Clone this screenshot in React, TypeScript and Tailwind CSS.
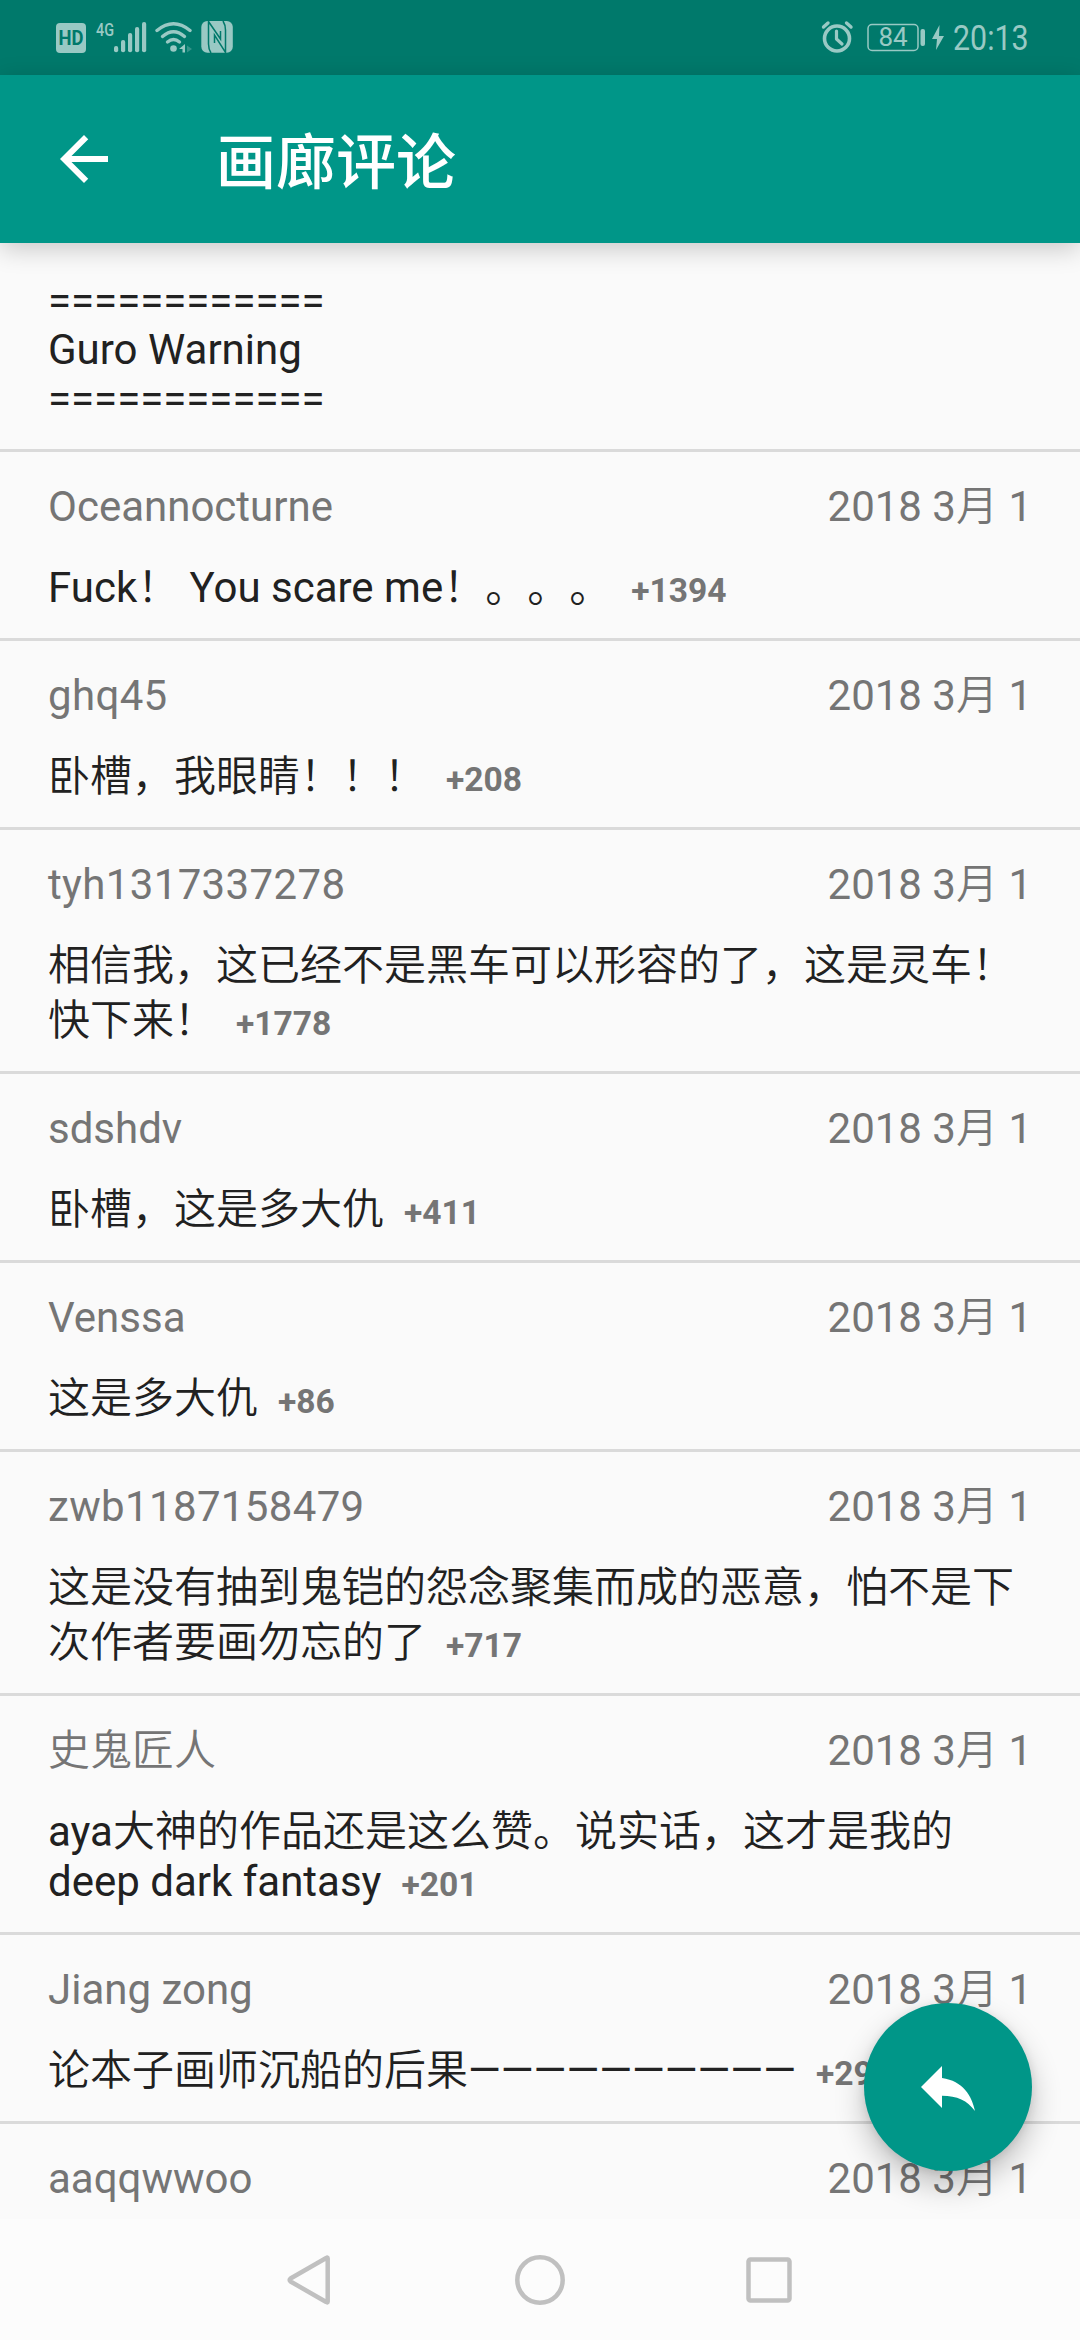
type Line = { text: string; latin?: boolean };

type Comment = {
  author: string;
  lines: Line[];
  score: string;
};

const DATE = '2018 3月 1';

const comments: Comment[] = [
  {
    author: 'Oceannocturne',
    lines: [{ text: 'Fuck！ You scare me！。。。' }],
    score: '+1394',
  },
  { author: 'ghq45', lines: [{ text: '卧槽，我眼睛！！！' }], score: '+208' },
  {
    author: 'tyh1317337278',
    lines: [
      { text: '相信我，这已经不是黑车可以形容的了，这是灵车！' },
      { text: '快下来！' },
    ],
    score: '+1778',
  },
  { author: 'sdshdv', lines: [{ text: '卧槽，这是多大仇' }], score: '+411' },
  { author: 'Venssa', lines: [{ text: '这是多大仇' }], score: '+86' },
  {
    author: 'zwb1187158479',
    lines: [
      { text: '这是没有抽到鬼铠的怨念聚集而成的恶意，怕不是下' },
      { text: '次作者要画勿忘的了' },
    ],
    score: '+717',
  },
  {
    author: '史鬼匠人',
    lines: [
      { text: 'aya大神的作品还是这么赞。说实话，这才是我的' },
      { text: 'deep dark fantasy', latin: true },
    ],
    score: '+201',
  },
  {
    author: 'Jiang zong',
    lines: [{ text: '论本子画师沉船的后果——————————' }],
    score: '+29',
  },
  { author: 'aaqqwwoo', lines: [], score: '' },
];

const StatusBar = () => (
  <div className="flex h-[75px] shrink-0 items-center justify-between bg-[#00796b] pr-[37px] pl-14 text-[#99c9c4]">
    <svg width="178" height="45" viewBox="56 15 178 45" fill="currentColor">
      <rect x="56" y="23" width="30" height="30" rx="4" />
      <text
        x="58.5"
        y="45"
        fill="#00796b"
        fontSize="20"
        fontWeight="700"
        textLength="25"
        lengthAdjust="spacingAndGlyphs"
        fontFamily="Roboto, sans-serif"
      >
        HD
      </text>
      <text
        x="96"
        y="35.5"
        fontSize="19"
        fontWeight="500"
        textLength="18"
        lengthAdjust="spacingAndGlyphs"
        fontFamily="Roboto, sans-serif"
      >
        4G
      </text>
      <rect x="114" y="46" width="4.2" height="6.3" rx="2" />
      <rect x="121" y="40" width="4.2" height="12.3" rx="2" />
      <rect x="128" y="33" width="4.2" height="19.3" rx="2" />
      <rect x="135" y="27" width="4.2" height="25.3" rx="2" />
      <rect x="142" y="22" width="4.2" height="30.3" rx="2" />
      <g fill="none" stroke="currentColor" strokeWidth="3.4" strokeLinecap="round">
        <path d="M157 30.5Q173.5 17 190 30.5" />
        <path d="M162.5 36.5Q173.5 27 184.5 36.5" />
        <path d="M167.5 42Q173.5 37 179.5 42" />
      </g>
      <circle cx="173.5" cy="48.5" r="3.3" />
      <path d="M185 44v8.500h-2.500v-3.500h-3.500z" />
      <path d="M187 45.500l5 3.500-5 3.500z" opacity="0.35" />
      <rect x="201.3" y="21" width="31.5" height="31.7" rx="6" />
      <path
        d="M211 53Q208.500 49 208.500 44V21.500L220.500 39V31M223 21Q225.500 25 225.500 30V52.500L214.500 35V43"
        fill="none"
        stroke="#00796b"
        strokeWidth="1.5"
      />
    </svg>
    <div className="flex items-center">
      <svg width="123" height="45" viewBox="821 15 123 45" fill="none" stroke="currentColor">
        <circle cx="837" cy="38.5" r="12.5" strokeWidth="3.6" />
        <path d="M836.5 31v8l5.5 5" strokeWidth="3.2" strokeLinecap="round" strokeLinejoin="round" />
        <path d="M823.5 27l4.500-4M846.500 23l4.500 4" strokeWidth="3.4" strokeLinecap="round" />
        <rect x="868" y="24.5" width="50" height="26" rx="4" strokeWidth="1.5" />
        <rect x="920.5" y="29" width="4.5" height="17" rx="2" fill="currentColor" stroke="none" />
        <text x="878.5" y="46" fontSize="26" fill="currentColor" stroke="none" fontFamily="Roboto, sans-serif">
          84
        </text>
        <path d="M939.5 25l-7.500 14h5l-1 11 8-14h-5z" fill="currentColor" stroke="none" />
      </svg>
      <span className="ml-[9px] w-[90px] origin-left scale-x-[0.88] text-[34.5px] leading-[42px]">
        20:13
      </span>
    </div>
  </div>
);

const CommentRow = ({ author, lines, score }: Comment) => (
  <article className="border-b-[3px] border-[#dadada] px-12 pt-[27px]">
    <div className="flex h-[81px] justify-between leading-[55px] text-[#757575]">
      <h3 className={/\d/.test(author) ? 'tracking-[0.35px]' : ''}>{author}</h3>
      <time>{DATE}</time>
    </div>
    <div className="pb-[23px]">
      {lines.map((line, i) => (
        <p
          key={line.text}
          className={
            line.latin
              ? 'h-[50px] leading-[45px] whitespace-nowrap'
              : 'h-[55px] leading-[55px] whitespace-nowrap'
          }
        >
          {line.text}
          {i === lines.length - 1 ? (
            <span className="ml-5 text-[33.6px] leading-none font-bold text-[#757575]">
              {score}
            </span>
          ) : null}
        </p>
      ))}
    </div>
  </article>
);

const App = () => {
  return (
    <div
      lang="zh-CN"
      className="relative flex h-[2340px] w-[1080px] flex-col overflow-hidden bg-[#fafafa] font-[Roboto,'Noto_Sans_CJK_SC_DemiLight','Noto_Sans_CJK_SC_Light','Noto_Sans_CJK_SC',sans-serif] text-[42px] text-[#212121] [text-spacing-trim:space-all]"
    >
      <StatusBar />
      <header className="relative z-10 flex h-[168px] shrink-0 items-center bg-[#009688] pl-12 text-white shadow-[0_6px_24px_rgba(0,0,0,0.2)]">
        <button aria-label="返回">
          <svg width="72" height="72" viewBox="0 0 24 24" fill="currentColor">
            <path d="M20 11H7.830l5.590-5.590L12 4l-8 8 8 8 1.410-1.410L7.830 13H20v-2z" />
          </svg>
        </button>
        <h1 className="ml-24 pt-[9px] font-[Roboto,'Noto_Sans_CJK_SC',sans-serif] text-[60px] leading-none font-medium">
          画廊评论
        </h1>
      </header>

      <main className="min-h-0 flex-1 overflow-hidden">
        <section className="h-[209px] border-b-[3px] border-[#dadada] px-12 pt-[33px] leading-[49px]">
          <p>============</p>
          <p>Guro Warning</p>
          <p>============</p>
        </section>
        {comments.map((comment) => (
          <CommentRow key={comment.author} {...comment} />
        ))}
      </main>

      <nav className="relative z-30 flex h-[121px] shrink-0 items-center justify-center bg-[#fcfcfc]">
        <svg width="508" height="54" viewBox="286 2253 508 54" fill="none" stroke="#c0c0c0" strokeWidth="4.5">
          <path
            d="M327.700 2258.500v43q0 1.500-1.500.5L290.500 2281.500q-1.500-1.500 0-3L326.200 2258q1.500-1 1.500.5z"
            strokeLinejoin="round"
          />
          <circle cx="540" cy="2280" r="22.7" />
          <rect x="748.5" y="2259.5" width="41" height="41" rx="2" />
        </svg>
      </nav>

      <button
        aria-label="回复"
        className="absolute right-12 bottom-[169px] z-20 flex size-[168px] items-center justify-center rounded-full bg-[#009688] text-white shadow-[0_14px_30px_rgba(0,0,0,0.24),0_2px_10px_rgba(0,0,0,0.1)]"
      >
        <svg width="72" height="72" viewBox="0 0 24 24" fill="currentColor">
          <path d="M10 9V5l-7 7 7 7v-4.100c5 0 8.500 1.600 11 5.100-1-5-4-10-11-11z" />
        </svg>
      </button>
    </div>
  );
};

export default App;
